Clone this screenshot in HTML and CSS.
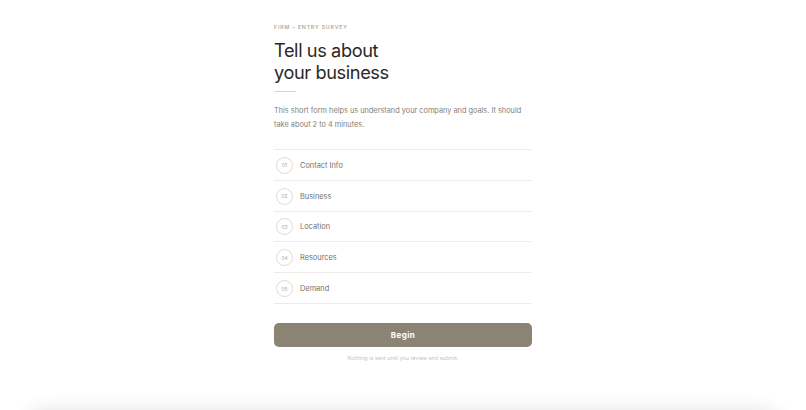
FILE: index.html
```html
<!DOCTYPE html>
<html lang="en">
<head>
<meta charset="utf-8">
<title>Entry Survey</title>
<link rel="stylesheet" href="styles.css">
</head>
<body>
<main class="intro">
  <p class="eyebrow">FIRM – ENTRY SURVEY</p>
  <h1 class="title">Tell us about<br>your business</h1>
  <hr class="rule">
  <p class="lead">This short form helps us understand your company and goals. It should take about 2 to 4 minutes.</p>
  <ol class="steps">
    <li class="step"><span class="num">01</span><span class="label">Contact Info</span></li>
    <li class="step"><span class="num">02</span><span class="label">Business</span></li>
    <li class="step"><span class="num">03</span><span class="label">Location</span></li>
    <li class="step"><span class="num">04</span><span class="label">Resources</span></li>
    <li class="step"><span class="num">05</span><span class="label">Demand</span></li>
  </ol>
  <button class="begin" type="button">Begin</button>
  <p class="note">Nothing is sent until you review and submit.</p>
</main>
<section class="next-card"></section>
</body>
</html>
```
FILE: styles.css
```css
* { box-sizing: border-box; }
html, body { margin: 0; padding: 0; background: #ffffff; }
body {
  font-family: "Inter", "Liberation Sans", sans-serif;
  color: #2a2825;
}
.intro {
  width: 258px;
  margin: 0 auto;
  padding-top: 24px;
  display: flex;
  flex-direction: column;
}
.eyebrow {
  margin: 0;
  font-size: 5.2px;
  line-height: 7px;
  letter-spacing: 0.85px;
  color: #a39d94;
  font-weight: 500;
}
.title {
  margin: 8px 0 0;
  font-size: 18.2px;
  line-height: 22px;
  font-weight: 400;
  color: #2b2926;
  letter-spacing: -0.4px;
}
.rule {
  margin: 8px 0 0;
  width: 22px;
  height: 1px;
  border: 0;
  background: #d9d2c7;
}
.lead {
  margin: 12px 0 0;
  font-size: 7.35px;
  line-height: 14px;
  color: #857e74;
}
.steps {
  list-style: none;
  margin: 17px 0 0;
  padding: 0;
  border-top: 1px solid #efece7;
}
.step {
  height: 30.8px;
  display: flex;
  align-items: center;
  gap: 7px;
  padding-left: 2px;
  padding-top: 1px;
  border-bottom: 1px solid #efece7;
}
.num {
  width: 17px;
  height: 17px;
  border: 1px solid #e0d9cf;
  border-radius: 50%;
  display: flex;
  align-items: center;
  justify-content: center;
  font-size: 4.8px;
  color: #a8a198;
}
.label {
  font-size: 7.4px;
  color: #76716a;
}
.begin {
  margin-top: 19px;
  height: 24px;
  width: 100%;
  border: 0;
  border-radius: 5px;
  background: #8b8373;
  color: #ffffff;
  font-family: inherit;
  font-size: 8px;
  font-weight: 700;
  letter-spacing: 0.4px;
}
.note {
  margin: 8px 0 0;
  text-align: center;
  font-size: 5.4px;
  color: #cbc4b9;
}
.next-card {
  width: 766px;
  height: 200px;
  margin: 52px auto 0;
  border-radius: 30px;
  background: #ffffff;
  box-shadow: 0 -3px 20px rgba(0, 0, 0, 0.11);
}
```
